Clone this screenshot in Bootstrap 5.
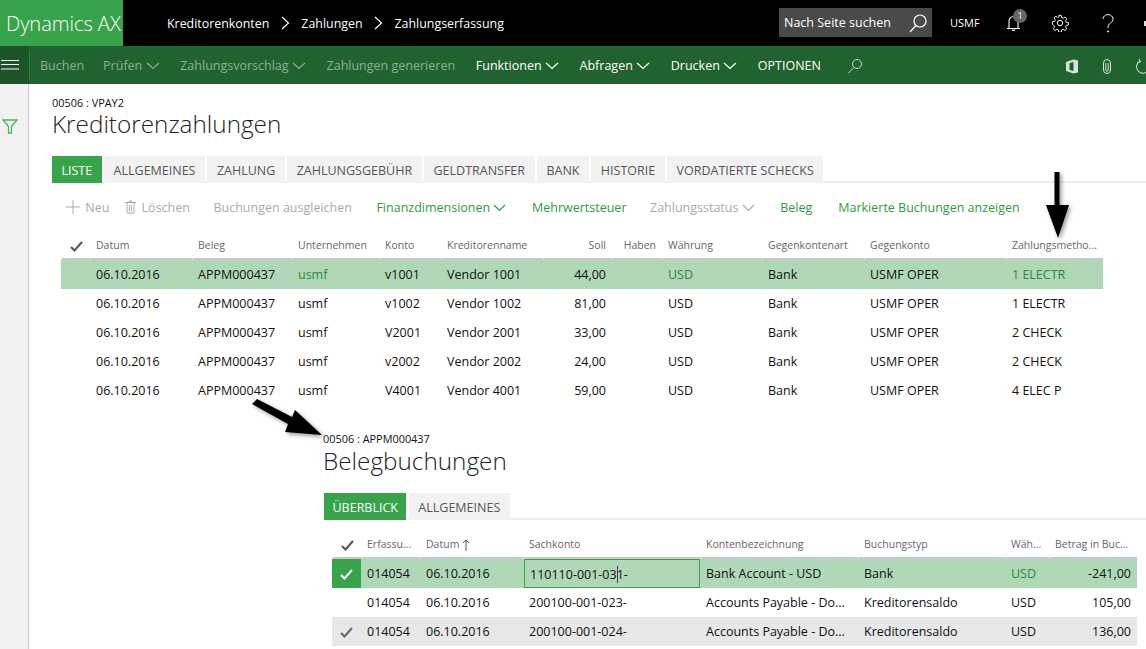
<!DOCTYPE html>
<html lang="de">
<head>
<meta charset="utf-8">
<title>Dynamics AX</title>
<link href="https://cdn.jsdelivr.net/npm/bootstrap@5.3.0/dist/css/bootstrap.min.css" rel="stylesheet">
<style>
html,body{height:649px;overflow:hidden}
body{font-family:"Open Sans","Liberation Sans",sans-serif;font-size:12.5px;color:#111;background:#fff;position:relative}
.top-strip{height:46px;background:#000;color:#fff}
.brand-box{width:123px;background:#37a34a;font-size:20.2px;font-weight:300;padding-left:6px;letter-spacing:-.1px}
.crumbs{padding-left:44px;padding-top:3px;font-size:12.4px;gap:11.5px}
.crumbs svg{margin-top:-3px}
.top-search{width:153px;height:29px;background:#4a4a4a;padding:1px 4px 0 5px;margin-right:18px;margin-top:-1px;font-size:12.5px}
.top-search svg{margin-top:-1px}
.top-usmf{font-size:11px;width:55px;padding-top:1px}
.top-ico{width:47px;position:relative}
.top-bell{padding-left:1px}
.top-gear{margin-left:-1px;margin-right:1px}
.top-help{padding-left:3px}
.bell-num{position:absolute;left:8px;top:-5px;width:14px;height:14px;border-radius:50%;background:#666;font-size:9px;line-height:14px;text-align:center}
.edge-dot{width:2px;height:5px;background:#ddd;margin-left:-2px}
.cmd-strip{height:38px;background:#216330;color:#fff;white-space:nowrap;overflow:hidden;font-size:12.5px}
.burger{width:29px;flex:none;background:#1d5429}
.cmd-rule{width:1px;height:28px;background:#3d7a4b;flex:none;align-self:center}
.cmd-row{padding-left:10px;padding-top:2px}
.cmd-strip .cmd-item{margin-right:20.7px}
.cmd-strip .cmd-item:first-child{margin-right:19px}
.cmd-dim{color:#8fae97}
.cmd-right{margin-left:auto;gap:24px;margin-right:-5px;flex:none}
.cmd-find{margin-left:5px}
.work{height:565px}
.side-rail{width:29px;flex:none;background:#f2f2f2;border-right:1px solid #ccc;padding-top:35px;padding-left:2px}
.work-main{padding-left:23px;flex:1;min-width:0}
.cap-line{font-size:10.9px;line-height:11px;margin-top:13px}
.big-title{font-size:24.3px;font-weight:300;line-height:32px;margin:0;color:#222}
.tab-strip{border-bottom:2px solid #eee;gap:2.4px;margin-top:16px;height:27px;font-size:12.5px}
.tab-pill{background:#f2f2f2;color:#555;padding:0 9.5px;height:27px;line-height:30px}
.tab-on{background:#37a34a;color:#fff}
.tool-strip{height:50px;padding-left:14px;font-size:12.5px;white-space:nowrap}
.tool-strip>span+span{margin-left:23.5px}
.tool-strip>span.tool-near{margin-left:16px}
.tool-strip>span.tool-fin{margin-left:24.5px}
.tool-strip>span.tool-mwst{margin-left:24.500px}
.tool-strip>span.tool-beleg{margin-left:24.5px}
.tool-strip>span.tool-last{margin-left:26px}
.tool-strip svg{margin-right:2px;vertical-align:-2px}
.tool-strip svg.tool-chev{margin-right:1px;vertical-align:0}
.tool-off{color:#aaa}
.tool-on{color:#2f9a44}
.ax-grid{table-layout:fixed;border-collapse:separate;border-spacing:0;margin:0}
.ax-grid th{font-weight:400;font-size:10.5px;color:#666;padding:0 6px 4px 5px;height:27px;vertical-align:bottom;border-bottom:2px solid #c8c8c8;border-left:1px solid #fff;white-space:nowrap;overflow:hidden;background:none}
.ax-grid th:first-child{padding-left:8px;padding-right:0}
.ax-grid td{padding:2px 6px 0;height:29px;vertical-align:middle;white-space:nowrap;overflow:hidden;background:none;color:#111;border:0}
.ax-grid tr.row-on td{background:#b0d8b6}
.ax-grid tr.row-alt td{background:#e8e8e8}
.ax-grid .green-txt{color:#2c8a40}
.ax-grid .num-r{text-align:right}
.ax-grid tr.row-on td.check-on{background:#37a34a;padding-left:8px}
.ax-grid tr.row-alt td:first-child{padding-left:8px}
.ax-grid td.edit-cell{padding:0}
.edit-box{display:block;height:29px;line-height:29px;border:1px solid #37a34a;padding-left:5px;margin-left:1px}
.caret-bar{border-left:1px solid #5b2a7a;margin:0 -1px 0 0}
.grid-one{margin-left:9px;width:1042px}
.grid-two{margin-left:9px;margin-top:12px;width:805px}
.grid-two th:last-child{padding-right:9px}
.sub-pane{margin-left:271px;margin-top:28px}
.sub-pane .big-title{margin-top:1px}
.sub-pane .tab-strip{margin-top:16px;margin-left:1px}
.sub-pane .tab-on{padding:0 8.5px}
.pt-arrow{position:absolute;filter:drop-shadow(2px 2px 2px rgba(0,0,0,.4))}
</style>
</head>
<body>
<div class="top-strip d-flex align-items-stretch">
  <div class="brand-box d-flex align-items-center">Dynamics AX</div>
  <div class="crumbs d-flex align-items-center">
    <span>Kreditorenkonten</span>
    <svg width="9" height="14" viewBox="0 0 9 14"><path d="M1 1l6.500 6L1 13" fill="none" stroke="#fff" stroke-width="1.200"/></svg>
    <span>Zahlungen</span>
    <svg width="9" height="14" viewBox="0 0 9 14"><path d="M1 1l6.500 6L1 13" fill="none" stroke="#fff" stroke-width="1.200"/></svg>
    <span>Zahlungserfassung</span>
  </div>
  <div class="ms-auto d-flex align-items-center">
    <div class="top-search d-flex align-items-center justify-content-between">
      <span>Nach Seite suchen</span>
      <svg width="20" height="20" viewBox="0 0 20 20"><circle cx="12" cy="8" r="6" fill="none" stroke="#fff" stroke-width="1.200"/><path d="M8 12.500L2 19" stroke="#fff" stroke-width="1.200"/></svg>
    </div>
    <div class="top-usmf">USMF</div>
    <div class="top-ico top-bell">
      <svg width="16" height="18" viewBox="0 0 16 18"><path d="M1 14.500h13M3 14V7.500a4.500 5 0 0 1 9 0V14M6 15.500a1.700 1.700 0 0 0 3 0" fill="none" stroke="#fff" stroke-width="1.100"/></svg>
      <span class="bell-num">1</span>
    </div>
    <div class="top-ico top-gear">
      <svg width="18" height="18" viewBox="0 0 20 20" fill="none" stroke="#fff" stroke-width="1.100"><circle cx="10" cy="10" r="3"/><path d="M8.500 1h3l.5 2.700 1.700.7 2.200-1.500 2.100 2.100-1.500 2.200.7 1.700 2.700.5v3l-2.700.5-.7 1.700 1.500 2.200-2.100 2.100-2.200-1.500-1.700.7-.5 2.700h-3l-.5-2.700-1.700-.7-2.200 1.500-2.100-2.100 1.500-2.200-.7-1.700L1 11.500v-3l2.700-.5.7-1.700-1.500-2.200 2.100-2.100 2.200 1.500 1.700-.7z" transform="translate(.6 .6) scale(.94)"/></svg>
    </div>
    <div class="top-ico top-help">
      <svg width="12" height="19" viewBox="0 0 12 19" fill="none" stroke="#fff" stroke-width="1"><path d="M1 5a5 4.500 0 1 1 7.500 4C6.500 10.500 6 11.500 6 14"/><circle cx="6" cy="17.500" r=".6" fill="#fff"/></svg>
    </div>
    <div class="edge-dot"></div>
  </div>
</div>
<div class="cmd-strip d-flex align-items-stretch">
  <div class="burger d-flex align-items-center">
    <svg width="20" height="10" viewBox="0 0 20 10"><path d="M1 .5h18M1 4.500h18M1 9h18" stroke="#fff" stroke-width="1"/></svg>
  </div>
  <div class="cmd-rule"></div>
  <div class="cmd-row d-flex align-items-center flex-grow-1">
    <span class="cmd-item cmd-dim">Buchen</span>
    <span class="cmd-item cmd-dim">Prüfen <svg width="14" height="8" viewBox="0 0 14 8"><path d="M1 1l6 5.500L13 1" fill="none" stroke="#8fae97" stroke-width="1.200"/></svg></span>
    <span class="cmd-item cmd-dim">Zahlungsvorschlag <svg width="14" height="8" viewBox="0 0 14 8"><path d="M1 1l6 5.500L13 1" fill="none" stroke="#8fae97" stroke-width="1.200"/></svg></span>
    <span class="cmd-item cmd-dim">Zahlungen generieren</span>
    <span class="cmd-item">Funktionen <svg width="14" height="8" viewBox="0 0 14 8"><path d="M1 1l6 5.500L13 1" fill="none" stroke="#fff" stroke-width="1.200"/></svg></span>
    <span class="cmd-item">Abfragen <svg width="14" height="8" viewBox="0 0 14 8"><path d="M1 1l6 5.500L13 1" fill="none" stroke="#fff" stroke-width="1.200"/></svg></span>
    <span class="cmd-item">Drucken <svg width="14" height="8" viewBox="0 0 14 8"><path d="M1 1l6 5.500L13 1" fill="none" stroke="#fff" stroke-width="1.200"/></svg></span>
    <span class="cmd-item">OPTIONEN</span>
    <svg class="cmd-find" width="16" height="16" viewBox="0 0 16 16"><circle cx="10" cy="6" r="4.500" fill="none" stroke="#c7d8cb" stroke-width="1"/><path d="M7 9.500L1.500 15" stroke="#c7d8cb" stroke-width="1"/></svg>
    <div class="cmd-right d-flex align-items-center">
      <svg width="14" height="15" viewBox="0 0 14 15"><path d="M1 3L8.500 .5 13 1.500v12L8.500 14.500 1 12z" fill="#d5e3d8"/><path d="M8.500 3L4.500 4v7l4 1z" fill="#216330"/></svg>
      <svg width="8" height="15" viewBox="0 0 8 15" fill="none" stroke="#d5e3d8" stroke-width="1"><rect x=".5" y=".5" width="7" height="14" rx="3.500"/><path d="M2.800 4v7a1.200 1.200 0 0 0 2.400 0V4"/></svg>
      <svg width="16" height="16" viewBox="0 0 16 16" fill="none" stroke="#e6eee8" stroke-width="1"><path d="M5 3a6.500 6.500 0 1 0 6 0M4 1l1.500 2.500L2.500 5"/></svg>
    </div>
  </div>
</div>
<div class="work d-flex">
  <div class="side-rail">
    <svg class="d-block" width="16" height="15" viewBox="0 0 16 15"><path d="M1 1h14L9.500 7.500V14h-3V7.500z" fill="none" stroke="#4cb35f" stroke-width="1.300"/></svg>
  </div>
  <div class="work-main">
    <div class="cap-line">00506 : VPAY2</div>
    <h1 class="big-title">Kreditorenzahlungen</h1>
    <div class="tab-strip d-flex">
      <span class="tab-pill tab-on">LISTE</span><span class="tab-pill">ALLGEMEINES</span><span class="tab-pill">ZAHLUNG</span><span class="tab-pill">ZAHLUNGSGEBÜHR</span><span class="tab-pill">GELDTRANSFER</span><span class="tab-pill">BANK</span><span class="tab-pill">HISTORIE</span><span class="tab-pill">VORDATIERTE SCHECKS</span>
    </div>
    <div class="tool-strip d-flex align-items-center">
      <span class="tool-off"><svg width="14" height="14" viewBox="0 0 14 14"><path d="M7 0v14M0 7h14" stroke="#aaa" stroke-width="1"/></svg> Neu</span>
      <span class="tool-off tool-near"><svg width="11" height="14" viewBox="0 0 11 14" fill="none" stroke="#aaa" stroke-width="1"><path d="M0 2.500h11M2 2.500V13h7V2.500M4 2.500V1h3v1.500M4.500 5v6M6.500 5v6"/></svg> Löschen</span>
      <span class="tool-off">Buchungen ausgleichen</span>
      <span class="tool-on tool-fin">Finanzdimensionen <svg class="tool-chev" width="13" height="8" viewBox="0 0 13 8"><path d="M1 1l5.500 5.500L12 1" fill="none" stroke="#2f9a44" stroke-width="1.200"/></svg></span>
      <span class="tool-on tool-mwst">Mehrwertsteuer</span>
      <span class="tool-off">Zahlungsstatus <svg class="tool-chev" width="13" height="8" viewBox="0 0 13 8"><path d="M1 1l5.500 5.500L12 1" fill="none" stroke="#aaa" stroke-width="1.200"/></svg></span>
      <span class="tool-on tool-beleg">Beleg</span>
      <span class="tool-on tool-last">Markierte Buchungen anzeigen</span>
    </div>
    <table class="table ax-grid grid-one">
      <colgroup><col style="width:29px"><col style="width:102px"><col style="width:100px"><col style="width:87px"><col style="width:62px"><col style="width:102px"><col style="width:69px"><col style="width:50px"><col style="width:100px"><col style="width:102px"><col style="width:142px"><col style="width:97px"></colgroup>
      <thead><tr>
        <th><svg width="13" height="11" viewBox="0 0 13 11"><path d="M1 6l3.500 3.500L12 1" fill="none" stroke="#555" stroke-width="2"/></svg></th>
        <th>Datum</th><th>Beleg</th><th>Unternehmen</th><th>Konto</th><th>Kreditorenname</th><th class="num-r">Soll</th><th class="num-r">Haben</th><th>Währung</th><th>Gegenkontenart</th><th>Gegenkonto</th><th>Zahlungsmetho...</th>
      </tr></thead>
      <tbody>
        <tr class="row-on"><td></td><td>06.10.2016</td><td>APPM000437</td><td class="green-txt">usmf</td><td>v1001</td><td>Vendor 1001</td><td class="num-r">44,00</td><td></td><td class="green-txt">USD</td><td>Bank</td><td>USMF OPER</td><td class="green-txt">1 ELECTR</td></tr>
        <tr><td></td><td>06.10.2016</td><td>APPM000437</td><td>usmf</td><td>v1002</td><td>Vendor 1002</td><td class="num-r">81,00</td><td></td><td>USD</td><td>Bank</td><td>USMF OPER</td><td>1 ELECTR</td></tr>
        <tr><td></td><td>06.10.2016</td><td>APPM000437</td><td>usmf</td><td>V2001</td><td>Vendor 2001</td><td class="num-r">33,00</td><td></td><td>USD</td><td>Bank</td><td>USMF OPER</td><td>2 CHECK</td></tr>
        <tr><td></td><td>06.10.2016</td><td>APPM000437</td><td>usmf</td><td>v2002</td><td>Vendor 2002</td><td class="num-r">24,00</td><td></td><td>USD</td><td>Bank</td><td>USMF OPER</td><td>2 CHECK</td></tr>
        <tr><td></td><td>06.10.2016</td><td>APPM000437</td><td>usmf</td><td>V4001</td><td>Vendor 4001</td><td class="num-r">59,00</td><td></td><td>USD</td><td>Bank</td><td>USMF OPER</td><td>4 ELEC P</td></tr>
      </tbody>
    </table>
    <div class="sub-pane">
      <div class="cap-line">00506 : APPM000437</div>
      <h2 class="big-title">Belegbuchungen</h2>
      <div class="tab-strip d-flex">
        <span class="tab-pill tab-on">ÜBERBLICK</span><span class="tab-pill">ALLGEMEINES</span>
      </div>
      <table class="table ax-grid grid-two">
        <colgroup><col style="width:29px"><col style="width:59px"><col style="width:103px"><col style="width:177px"><col style="width:158px"><col style="width:147px"><col style="width:44px"><col style="width:88px"></colgroup>
        <thead><tr>
          <th><svg width="13" height="11" viewBox="0 0 13 11"><path d="M1 6l3.500 3.500L12 1" fill="none" stroke="#555" stroke-width="2"/></svg></th>
          <th>Erfassu...</th><th>Datum <svg width="8" height="12" viewBox="0 0 8 12"><path d="M4 12V1M1 4l3-3 3 3" fill="none" stroke="#555"/></svg></th><th>Sachkonto</th><th>Kontenbezeichnung</th><th>Buchungstyp</th><th>Wäh...</th><th class="num-r">Betrag in Buc...</th>
        </tr></thead>
        <tbody>
          <tr class="row-on"><td class="check-on"><svg width="13" height="11" viewBox="0 0 13 11"><path d="M1 6l3.500 3.500L12 1" fill="none" stroke="#fff" stroke-width="2"/></svg></td><td>014054</td><td>06.10.2016</td><td class="edit-cell"><span class="edit-box">110110-001-03<span class="caret-bar"></span>1-</span></td><td>Bank Account - USD</td><td>Bank</td><td class="green-txt">USD</td><td class="num-r">-241,00</td></tr>
          <tr><td></td><td>014054</td><td>06.10.2016</td><td>200100-001-023-</td><td>Accounts Payable - Do...</td><td>Kreditorensaldo</td><td>USD</td><td class="num-r">105,00</td></tr>
          <tr class="row-alt"><td><svg width="13" height="11" viewBox="0 0 13 11"><path d="M1 6l3.500 3.500L12 1" fill="none" stroke="#666" stroke-width="2"/></svg></td><td>014054</td><td>06.10.2016</td><td>200100-001-024-</td><td>Accounts Payable - Do...</td><td>Kreditorensaldo</td><td>USD</td><td class="num-r">136,00</td></tr>
        </tbody>
      </table>
    </div>
  </div>
</div>
<svg class="pt-arrow" style="left:1045px;top:171px" width="25" height="70" viewBox="0 0 25 70"><path d="M9.500 1h5v33H24L13 67 1 34h8.500z" fill="#000"/></svg>
<svg class="pt-arrow" style="left:250px;top:398px" width="74" height="40" viewBox="0 0 74 40"><path d="M7 1l35 18 3-7 27 25-37-3 3-8L2 6z" fill="#000"/></svg>
</body>
</html>
